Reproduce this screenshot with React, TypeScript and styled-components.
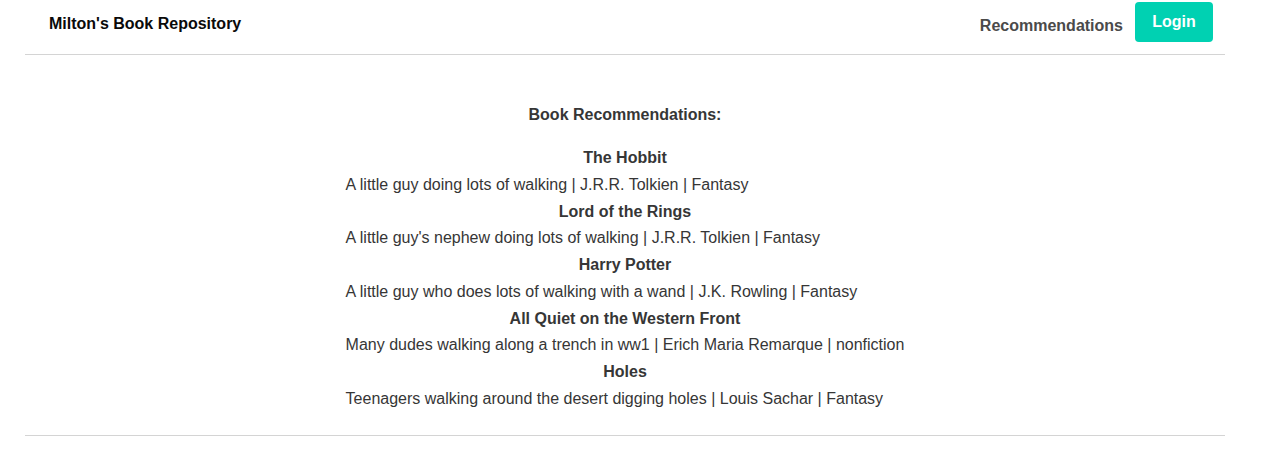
import React from "react";
import styled, { createGlobalStyle } from "styled-components";

const Global = createGlobalStyle`
  html, body { margin: 0; padding: 0; background: #fff; }
  body { font-family: "Liberation Sans", Arial, sans-serif; font-size: 16px; color: #363636; }
`;

const Page = styled.div`
  width: 1200px;
  margin-left: 25px;
`;

const Navbar = styled.nav`
  height: 54px;
  display: flex;
  align-items: flex-start;
  justify-content: space-between;
  border-bottom: 1px solid #d4d4d4;
`;

const Brand = styled.a`
  margin: 12px 0 0 24px;
  font-weight: 700;
  font-size: 16px;
  line-height: 24px;
  color: #0a0a0a;
  text-decoration: none;
`;

const NavEnd = styled.div`
  display: flex;
  align-items: flex-start;
  gap: 12px;
  margin-right: 12px;
`;

const NavLink = styled.a`
  margin-top: 14px;
  font-weight: 700;
  font-size: 16px;
  line-height: 24px;
  color: #4a4a4a;
  text-decoration: none;
`;

const Button = styled.button`
  margin-top: 2px;
  height: 40px;
  width: 78px;
  border: none;
  border-radius: 4px;
  background: #00d1b2;
  color: #fff;
  font-family: inherit;
  font-weight: 700;
  font-size: 16px;
  line-height: 24px;
  padding: 0 0 1px;
  cursor: pointer;
`;

const Section = styled.section`
  padding: 48px 0 22px;
  display: flex;
  flex-direction: column;
  align-items: center;
  border-bottom: 1px solid #d4d4d4;
`;

const Heading = styled.h2`
  margin: 0 0 18px;
  font-size: 16px;
  line-height: 24px;
  font-weight: 700;
`;

const List = styled.div`
  display: flex;
  flex-direction: column;
`;

const Title = styled.div`
  text-align: center;
  font-weight: 700;
  line-height: 26.5px;
`;

const Desc = styled.div`
  text-align: left;
  line-height: 27px;
  margin-top: -1px;
  margin-bottom: 1px;
`;

const books = [
  { title: "The Hobbit", desc: "A little guy doing lots of walking", author: "J.R.R. Tolkien", genre: "Fantasy" },
  { title: "Lord of the Rings", desc: "A little guy's nephew doing lots of walking", author: "J.R.R. Tolkien", genre: "Fantasy" },
  { title: "Harry Potter", desc: "A little guy who does lots of walking with a wand", author: "J.K. Rowling", genre: "Fantasy" },
  { title: "All Quiet on the Western Front", desc: "Many dudes walking along a trench in ww1", author: "Erich Maria Remarque", genre: "nonfiction" },
  { title: "Holes", desc: "Teenagers walking around the desert digging holes", author: "Louis Sachar", genre: "Fantasy" },
];

export default function App() {
  return (
    <Page>
      <Global />
      <Navbar>
        <Brand href="#">Milton's Book Repository</Brand>
        <NavEnd>
          <NavLink href="#">Recommendations</NavLink>
          <Button>Login</Button>
        </NavEnd>
      </Navbar>
      <Section>
        <Heading>Book Recommendations:</Heading>
        <List>
          {books.map((b) => (
            <React.Fragment key={b.title}>
              <Title>{b.title}</Title>
              <Desc>
                {b.desc} | {b.author} | {b.genre}
              </Desc>
            </React.Fragment>
          ))}
        </List>
      </Section>
    </Page>
  );
}
